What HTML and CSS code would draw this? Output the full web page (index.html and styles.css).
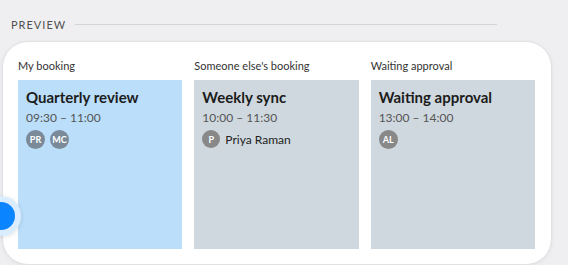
FILE: index.html
```html
<!DOCTYPE html>
<html>

<head>
  <title>Preview</title>
  <link rel="stylesheet" href="styles.css">
</head>

<body>
  <div class='sectionHeader'>
    <span class='sectionTitle'>PREVIEW</span>
    <span class='sectionRule'></span>
  </div>

  <div class='previewCard'>
    <div class='column'>
      <div class='columnLabel'>My booking</div>
      <div class='booking mine'>
        <div class='bookingTitle'>Quarterly review</div>
        <div class='bookingTime'>09:30 – 11:00</div>
        <div class='people'>
          <span class='avatar blueGrey'>PR</span>
          <span class='avatar blueGrey'>MC</span>
        </div>
      </div>
    </div>

    <div class='column'>
      <div class='columnLabel'>Someone else's booking</div>
      <div class='booking other'>
        <div class='bookingTitle'>Weekly sync</div>
        <div class='bookingTime'>10:00 – 11:30</div>
        <div class='people'>
          <span class='avatar grey small'>P</span>
          <span class='personName'>Priya Raman</span>
        </div>
      </div>
    </div>

    <div class='column'>
      <div class='columnLabel'>Waiting approval</div>
      <div class='booking other'>
        <div class='bookingTitle'>Waiting approval</div>
        <div class='bookingTime'>13:00 – 14:00</div>
        <div class='people'>
          <span class='avatar grey'>AL</span>
        </div>
      </div>
    </div>

    <div class='floatingDot'></div>
  </div>
</body>

</html>
```

FILE: styles.css
```css
body {
  margin: 0;
  height: 265px;
  overflow: hidden;
  background: #efeff2;
  font-family: Lato, "Open Sans", sans-serif;
  color: #222;
}

.sectionHeader {
  display: flex;
  align-items: center;
  gap: 9px;
  padding: 17px 71px 0 11px;
  height: 14px;
}

.sectionTitle {
  font-size: 11px;
  letter-spacing: 1px;
  color: #505050;
}

.sectionRule {
  flex: 1;
  height: 1px;
  background: #d3d3d8;
}

.previewCard {
  position: relative;
  display: flex;
  gap: 12px;
  margin: 10px 0 0 2px;
  width: 517px;
  height: 190px;
  padding: 17px 16px 15px 15px;
  background: #ffffff;
  border: 1px solid #e1e1e5;
  border-radius: 26px;
  box-shadow: rgba(0, 0, 0, 0.06) 0px 1px 4px;
}

.column {
  display: flex;
  flex-direction: column;
  width: 165px;
}

.columnLabel {
  font-size: 11px;
  color: #333;
  height: 21px;
}

.booking {
  flex: 1;
  padding: 8px 8px;
}

.mine {
  background: #bbdefa;
}

.other {
  background: #cfd8de;
}

.bookingTitle {
  font-size: 15px;
  font-weight: bold;
  color: #1c1c1c;
  line-height: 19px;
}

.bookingTime {
  font-size: 12px;
  color: #555;
  margin-top: 3px;
  line-height: 15px;
}

.people {
  display: flex;
  align-items: center;
  gap: 5px;
  margin-top: 5px;
}

.avatar {
  display: flex;
  align-items: center;
  justify-content: center;
  width: 19px;
  height: 19px;
  border-radius: 50%;
  color: #ffffff;
  font-size: 9px;
  font-weight: bold;
}

.avatar.small {
  width: 18px;
  height: 18px;
}

.blueGrey {
  background: #7a8a99;
}

.grey {
  background: #888888;
}

.personName {
  font-size: 12px;
  color: #222;
}

.floatingDot {
  position: absolute;
  left: -22px;
  top: 154px;
  width: 28px;
  height: 28px;
  border-radius: 50%;
  background: #0a84ff;
  border: 6px solid rgba(255, 255, 255, 0.85);
  box-shadow: rgba(0, 0, 0, 0.12) 0px 1px 5px;
}
```
